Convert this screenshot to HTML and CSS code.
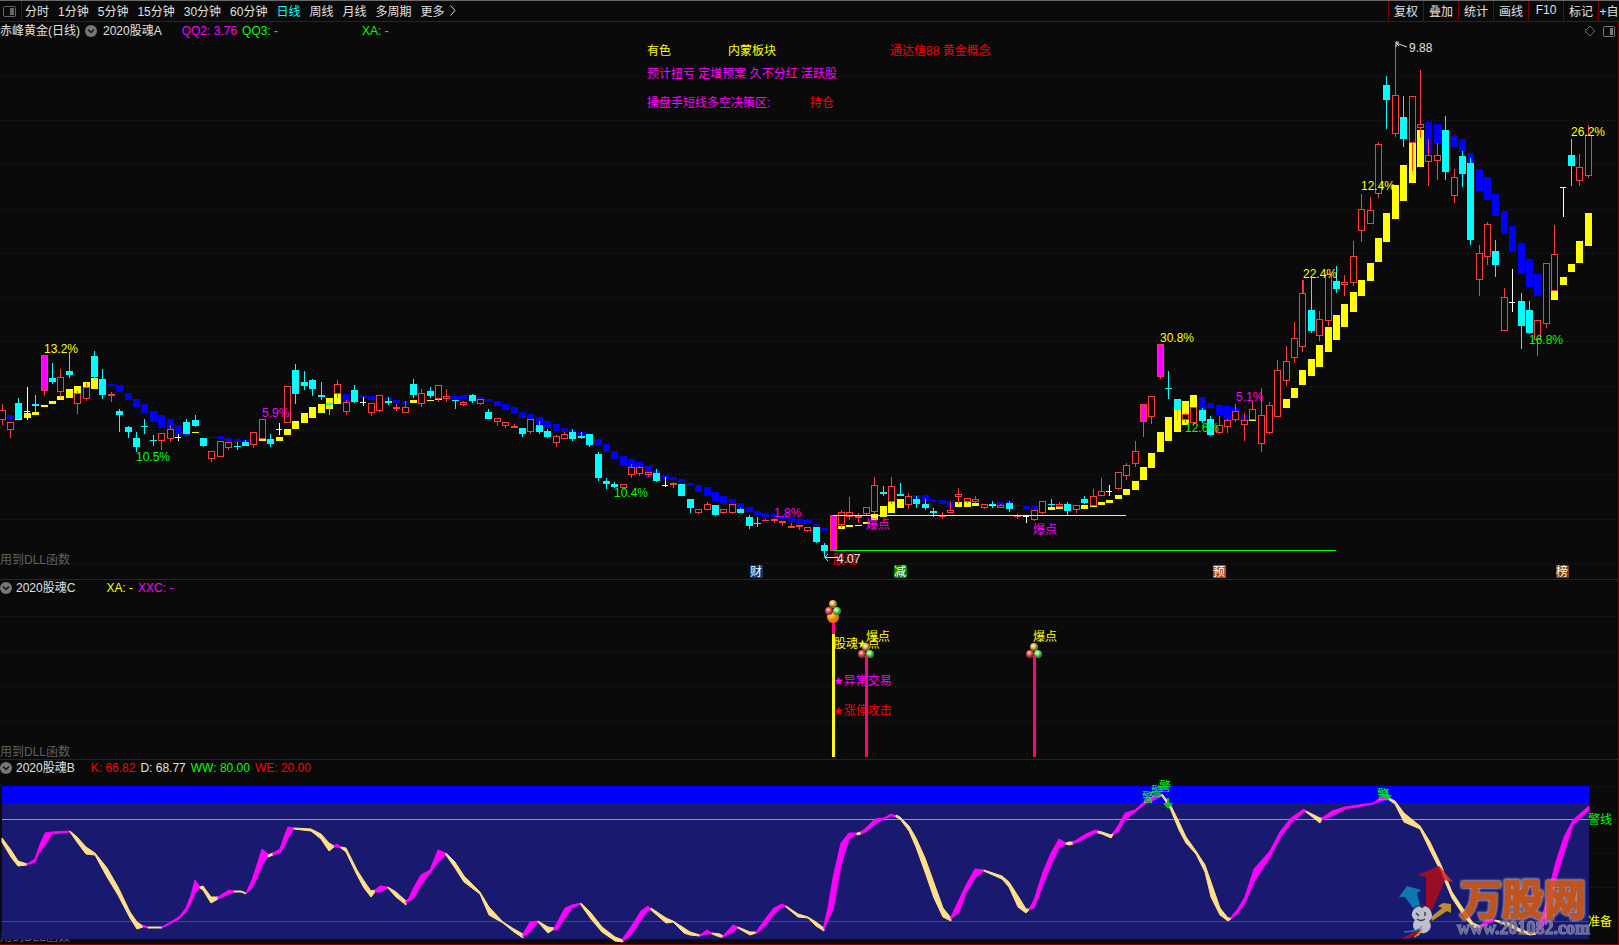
FILE: index.html
```html
<!DOCTYPE html>
<html lang="zh-CN">
<head>
	<meta charset="utf-8">
	<title>赤峰黄金(日线)</title>
	<link rel="stylesheet" href="styles.css">
</head>
<body>
	<nav class="toolbar">
		<button class="layout-btn" aria-label="布局">
			<svg width="13" height="11" viewBox="0 0 13 11"><rect x="0.5" y="0.5" width="12" height="10" rx="1" fill="none" stroke="#666"/><rect x="7" y="2" width="4" height="7" fill="#666"/></svg>
		</button>
		<div class="periods">
			<button>分时</button>
			<button>1分钟</button>
			<button>5分钟</button>
			<button>15分钟</button>
			<button>30分钟</button>
			<button>60分钟</button>
			<button class="active">日线</button>
			<button>周线</button>
			<button>月线</button>
			<button>多周期</button>
			<button class="more">更多<svg width="6" height="11" viewBox="0 0 6 11"><path d="M0.5 0.5L5 5.5L0.5 10.5" fill="none" stroke="#ddd"/></svg></button>
		</div>
		<div class="tools">
			<button>复权</button>
			<button>叠加</button>
			<button>统计</button>
			<button>画线</button>
			<button>F10</button>
			<button>标记</button>
			<button class="self">+自</button>
		</div>
	</nav>

	<main class="charts">
		<section class="pane">
			<div class="legend">
				<span>赤峰黄金(日线)</span>
				<button class="fold" aria-label="指标"><svg width="12" height="12" viewBox="0 0 12 12"><circle cx="6" cy="6" r="6" fill="#777"/><path d="M3 4.5L6 7.5L9 4.5" fill="none" stroke="#111" stroke-width="1.5"/></svg></button>
				<span class="name name-a">2020股魂A</span>
				<span class="magenta">QQ2: 3.76</span>
				<span class="green">QQ3: -</span>
				<span class="green far">XA: -</span>
				<span class="corner">
					<svg width="12" height="12" viewBox="0 0 12 12"><path d="M6 1L11 6L6 11L1 6Z" fill="none" stroke="#666"/></svg>
					<svg width="12" height="11" viewBox="0 0 12 11"><rect x="0.5" y="0.5" width="11" height="10" rx="1" fill="none" stroke="#777"/><rect x="7" y="2" width="3" height="7" fill="#777"/></svg>
				</span>
			</div>
			<svg class="plot" viewBox="0 40 1618 539">
				<g class="grid" id="gridMain"></g>
				<text x="0" y="564" class="dim">用到DLL函数</text>
				<g id="candles"></g>
				<path d="M833 515.5H1126" stroke="#ff0" class="crisp"/>
				<path d="M833 550.5H1336" stroke="#0f0" class="crisp"/>

				<g class="f-yellow">
					<text x="647" y="55">有色</text>
					<text x="728" y="55">内蒙板块</text>
					<text x="44" y="353">13.2%</text>
					<text x="1160" y="342">30.8%</text>
					<text x="1303" y="278">22.4%</text>
					<text x="1361" y="190">12.4%</text>
					<text x="1571" y="136">26.2%</text>
				</g>
				<g class="f-red">
					<text x="890" y="55">通达信88 黄金概念</text>
					<text x="810" y="107">持仓</text>
					<text x="833" y="564">股魂</text>
				</g>
				<g class="f-magenta">
					<text x="647" y="78">预计扭亏 定增预案 久不分红 活跃股</text>
					<text x="647" y="107">操盘手短线多空决策区:</text>
					<text x="262" y="417">5.9%</text>
					<text x="774" y="517">1.8%</text>
					<text x="1236" y="401">5.1%</text>
					<text x="866" y="529">爆点</text>
					<text x="1033" y="534">爆点</text>
				</g>
				<g class="f-green">
					<text x="136" y="461">10.5%</text>
					<text x="614" y="497">10.4%</text>
					<text x="1185" y="432">12.6%</text>
					<text x="1529" y="344">16.8%</text>
				</g>
				<g class="f-white">
					<text x="1409" y="52">9.88</text>
					<text x="837" y="563">4.07</text>
				</g>
				<path d="M1396 43L1407 47M1396 47V42H1399M1396 43L1399 46" fill="none" stroke="#ddd"/>
				<path d="M825 557.5H838M828 554L825 557.5L828 561" fill="none" stroke="#ddd"/>

				<g class="tags">
					<rect x="750" y="565" width="13" height="13" fill="#003a78"/><text x="756" y="576">财</text>
					<rect x="894" y="565" width="13" height="13" fill="#008000"/><text x="900" y="576">减</text>
					<rect x="1213" y="565" width="13" height="13" fill="#c0440c"/><text x="1219" y="576">预</text>
					<rect x="1556" y="565" width="13" height="13" fill="#803c00"/><text x="1562" y="576">榜</text>
				</g>
			</svg>
		</section>

		<section class="pane">
			<div class="legend legend-sub">
				<button class="fold" aria-label="指标"><svg width="12" height="12" viewBox="0 0 12 12"><circle cx="6" cy="6" r="6" fill="#777"/><path d="M3 4.5L6 7.5L9 4.5" fill="none" stroke="#111" stroke-width="1.5"/></svg></button>
				<span class="name name-c">2020股魂C</span>
				<span class="yellow">XA: -</span>
				<span class="magenta">XXC: -</span>
			</div>
			<svg class="plot" viewBox="0 598 1618 161">
				<defs>
					<radialGradient id="gold" cx="0.4" cy="0.35"><stop offset="0" stop-color="#fff8dc"/><stop offset="0.6" stop-color="#d8b450"/><stop offset="1" stop-color="#8a6a20"/></radialGradient>
					<radialGradient id="ruby" cx="0.4" cy="0.35"><stop offset="0" stop-color="#ffe0e0"/><stop offset="0.6" stop-color="#e05050"/><stop offset="1" stop-color="#a02828"/></radialGradient>
					<radialGradient id="jade" cx="0.4" cy="0.35"><stop offset="0" stop-color="#f0ffe8"/><stop offset="0.6" stop-color="#70dc60"/><stop offset="1" stop-color="#309030"/></radialGradient>
					<radialGradient id="amber" cx="0.35" cy="0.3"><stop offset="0" stop-color="#fff8b0"/><stop offset="0.5" stop-color="#ffb020"/><stop offset="1" stop-color="#f07800"/></radialGradient>
					<g id="balls">
						<circle cx="0" cy="-7" r="4" fill="url(#gold)"/>
						<circle cx="-4" cy="0" r="4" fill="url(#ruby)"/>
						<circle cx="4" cy="0" r="4" fill="url(#jade)"/>
					</g>
				</defs>
				<g class="grid" id="gridMid"></g>
				<text x="0" y="756" class="dim">用到DLL函数</text>
				<rect x="832" y="620" width="3" height="14" fill="#ff0080"/>
				<rect x="832" y="634" width="3" height="123" fill="#ff0"/>
				<g class="f-yellow">
					<text x="834" y="648">股魂<tspan class="star" x="857">★</tspan>点</text>
					<text x="866" y="641">爆点</text>
					<text x="1033" y="641">爆点</text>
				</g>
				<text x="833" y="685" class="f-magenta"><tspan class="star">★</tspan>异常交易</text>
				<text x="833" y="715" class="f-red"><tspan class="star">★</tspan>涨停攻击</text>
				<rect x="865" y="656" width="3" height="101" fill="#ff0080"/>
				<rect x="1033" y="656" width="3" height="101" fill="#ff0080"/>
				<circle cx="833" cy="617" r="6" fill="url(#amber)"/>
				<use href="#balls" x="833" y="611"/>
				<use href="#balls" x="866" y="654"/>
				<use href="#balls" x="1034" y="654"/>
			</svg>
		</section>

		<section class="pane">
			<div class="legend legend-sub">
				<button class="fold" aria-label="指标"><svg width="12" height="12" viewBox="0 0 12 12"><circle cx="6" cy="6" r="6" fill="#777"/><path d="M3 4.5L6 7.5L9 4.5" fill="none" stroke="#111" stroke-width="1.5"/></svg></button>
				<span class="name name-b">2020股魂B</span>
				<span class="red">K: 66.82</span>
				<span>D: 68.77</span>
				<span class="green">WW: 80.00</span>
				<span class="red">WE: 20.00</span>
			</div>
			<svg class="plot" viewBox="0 778 1618 166">
				<g class="grid" id="gridLow"></g>
				<text x="0" y="941" class="dim">用到DLL函数</text>
				<rect x="2" y="803" width="1587" height="136" fill="#191970"/>
				<rect x="2" y="786" width="1587" height="17" fill="#00f"/>
				<rect x="2" y="819" width="1587" height="1" fill="#0f0"/>
				<rect x="2" y="921" width="1587" height="1" fill="#f00"/>
				<g id="kd"></g>
				<g class="f-green">
					<text x="1142" y="802">警</text>
					<text x="1151" y="796">警</text>
					<text x="1159" y="791">警</text>
					<text x="1377" y="799">警</text>
					<text x="1588" y="824">警线</text>
				</g>
				<path d="M1167 798h2v5h4l-5 6l-5 -6h4zM1386 790h2v5h4l-5 6l-5 -6h4z" fill="#00d020"/>
				<text x="1588" y="926" class="f-yellow">准备</text>

				<g class="mark">
					<path d="M1439 866L1453 882L1445 880L1432 910L1426 907V877L1417 875Z" fill="#a80c20"/>
					<path d="M1439 866L1453 882L1445 880Z" fill="#c8382c"/>
					<path d="M1407 886L1421 890L1417 893L1420 905L1413 908L1405 897H1399Z" fill="#0c84b8"/>
					<path d="M1443 903L1451 904V913L1447 911L1432 921L1431 917L1442 908L1438 906Z" fill="#cc9c20"/>
					<path d="M1422 906q9 0 10 9q0 4 -3 6q3 4 1 8q-3 5 -9 4q-8 -1 -8 -8q0 -3 2 -5q-4 -3 -3 -7q2 -7 10 -7z" fill="#d0d0dc"/>
					<path d="M1416 913l3 3M1425 912v4M1417 919q4 3 8 0" fill="none" stroke="#444" stroke-width="1.5"/>
					<circle cx="1422" cy="906" r="2" fill="#333"/>
					<path d="M1422 926Q1418 932 1404 932L1418 930Z" fill="#0c94d0" stroke="#0c94d0"/>
					<path d="M1423 927Q1416 938 1402 939Q1410 933 1421 929Z" fill="#b01020"/>
					<path d="M1422 930L1414 937L1419 935Z" fill="#cc9c20" stroke="#cc9c20"/>
					<text x="1460" y="915" class="mark-name">万股网</text>
					<text x="1457" y="934" class="mark-url">www.201082.com</text>
				</g>
			</svg>
		</section>
	</main>
	<script src="script.js"></script>
</body>
</html>
```
FILE: styles.css
```css
* {
	box-sizing: border-box;
}
body {
	margin: 0;
	background: #0a0a0a;
	color: #e0e0e0;
	font: 12px "Liberation Sans", "Noto Sans CJK SC", sans-serif;
}
button {
	background: none;
	border: 0;
	padding: 0;
	color: inherit;
	font: inherit;
	white-space: nowrap;
	cursor: pointer;
}

/* top bar */
.toolbar {
	display: flex;
	height: 22px;
	border-top: 1px solid #696969;
	border-bottom: 1px solid #800000;
}
.layout-btn {
	display: flex;
	align-items: center;
	width: 22px;
	padding-left: 3px;
	border-right: 1px solid #800000;
}
.periods {
	display: flex;
	flex: 1;
	gap: 9px;
	padding-left: 3px;
}
.periods button, .tools button {
	padding-bottom: 2px;
}
.active {
	color: #00ffff;
}
.more {
	display: flex;
	align-items: center;
	gap: 5px;
}
.tools {
	display: flex;
}
.tools button {
	width: 35px;
	border-left: 1px solid #800000;
}
.tools .self {
	width: 21px;
}

/* panes */
.charts {
	border-right: 1px solid #800000;
}
.pane {
	border-bottom: 1px solid #800000;
}
.legend {
	display: flex;
	align-items: center;
	gap: 5px;
	height: 18px;
	line-height: 18px;
	white-space: nowrap;
}
.legend-sub {
	padding-bottom: 2px;
}
.legend .fold {
	display: flex;
}
.name-a {
	margin-left: 1px;
	margin-right: 15px;
}
.name-b {
	margin-left: -1px;
	margin-right: 11px;
}
.name-c {
	margin-left: -1px;
	margin-right: 26px;
}
.far {
	margin-left: 79px;
}
.corner {
	display: flex;
	align-items: center;
	gap: 7px;
	margin-left: auto;
	padding-right: 3px;
}
.plot {
	display: block;
	width: 100%;
	height: auto;
}

.red { color: #ff0000; }
.green { color: #00ff00; }
.yellow { color: #ffff00; }
.magenta { color: #ff00ff; }

.f-red { fill: #ff0000; }
.f-green { fill: #00ff00; }
.f-yellow { fill: #ffff00; }
.f-magenta { fill: #ff00ff; }
.f-white { fill: #e0e0e0; }
.dim { fill: #606060; }
.star { font-family: "DejaVu Sans", sans-serif; }

.grid path {
	stroke: #800000;
	stroke-dasharray: 1 3;
	shape-rendering: crispEdges;
}
.crisp, #candles {
	shape-rendering: crispEdges;
}
.tags text {
	fill: #ffffff;
	text-anchor: middle;
}
.mark {
	opacity: 0.9;
}
.mark-name {
	font-size: 42px;
	font-weight: bold;
	fill: #d05c18;
	stroke: #d05c18;
	stroke-width: 2px;
	filter: drop-shadow(0 0 1px #b0b0c8) drop-shadow(0 0 1px #b0b0c8);
}
.mark-url {
	font: bold 18px "Liberation Serif", serif;
	fill: #74749c;
	stroke: #a0a0b8;
	stroke-width: 1px;
	paint-order: stroke;
}
```
FILE: script.js
```js
// kind, high, body top, body bottom, low [, ribbon colour, ribbon top, ribbon bottom]
// r = hollow red, c = cyan, m = magenta, w = white cross
var bars = `r 404 410 420 425
r 422 422 430 438 b 415 419
c 398 403 419 419 y 419 420
w 387 411 412 420 y 413 418
c 395 404 406 412 y 412 415
m 355 355 391 396 y 405 407
c 363 378 382 384 y 401 404
r 369 377 392 397 y 396 400
c 352 371 375 378 y 389 398
r 391 393 404 414 y 386 393
r 383 387 399 401 y 382 387
c 351 356 377 379 y 378 389
c 369 379 395 399
r 392 394 396 402 b 384 386
c 409 411 415 432 b 385 392
c 426 427 432 438 b 393 400
c 432 438 447 452 b 399 407
c 419 426 427 434 b 404 413
c 435 440 441 446 b 411 422
r 433 433 441 450 b 415 428
r 425 429 439 442 b 419 429
w 434 437 438 441 b 425 436
c 419 422 434 434 b 434 436
c 415 420 426 427 y 432 433
c 438 438 446 447 b 435 436
r 451 451 459 462 b 437 438
r 441 441 457 457 b 436 439
r 442 442 448 450 b 438 441
c 442 446 447 450 b 439 442
c 440 442 446 446 b 440 442
r 432 432 445 448
r 419 419 439 439 y 439 441
c 434 439 444 447
w 423 429 430 435 y 437 441
r 386 386 423 423 y 429 435
c 364 370 394 404 y 421 429
c 371 382 386 390 y 413 423
c 379 380 389 396 y 407 418
c 382 395 397 400 y 404 413
c 402 403 405 415 y 398 409
r 380 384 394 398 y 394 404
r 400 402 412 415 b 394 402
c 385 390 402 403
w 397 402 403 406 b 395 398
r 403 403 413 416 b 396 400
r 395 395 411 412
c 397 401 403 405 b 398 400
r 404 407 409 411 b 400 403
r 401 407 413 413 b 401 404
c 379 384 395 398 y 400 403
r 389 393 404 407
c 387 391 396 398 y 400 401
r 385 385 399 402 y 399 400
r 389 396 399 402
c 400 400 401 409 b 396 399
r 401 402 405 406 b 395 399
c 394 395 401 403
r 399 399 404 405 b 397 399
c 409 412 419 419 b 399 401
r 418 418 422 426 b 401 406
r 422 422 426 428 b 404 410
r 424 426 428 428 b 407 413
c 428 428 434 437 b 412 418
r 419 419 432 434 b 414 419
c 421 425 432 434 b 417 425
c 429 431 437 438 b 421 428
r 435 436 443 447 b 424 431
r 432 434 439 439 b 428 432
c 429 432 439 441 b 430 432
c 432 436 438 439 b 432 435
c 434 434 445 447
c 452 454 478 481 b 439 445
c 478 481 484 489 b 444 452
c 482 484 487 488 b 451 459
r 484 484 488 488 b 456 466
r 464 467 475 478 b 459 467
r 466 467 474 476 b 462 467
r 472 472 475 477 b 466 478
c 469 473 481 482 b 470 473
w 477 485 486 487 b 475 479
r 482 483 485 488 b 477 480
c 484 484 496 496 b 479 482
c 499 499 508 513 b 483 486
r 509 509 513 514 b 485 492
r 502 504 510 510 b 487 496
c 505 505 515 516 b 492 501
r 509 509 513 514 b 496 504
r 504 504 513 514 b 499 504
c 508 509 513 513 b 503 509
c 515 517 526 529 b 507 512
c 517 523 524 527 b 511 515
r 519 520 521 521 b 513 517
r 518 519 521 523 b 514 517
r 521 521 523 526 b 515 519
r 523 526 528 528 b 518 522
r 525 525 527 530 b 519 524
r 527 527 531 532 b 520 524
c 527 527 542 543 b 524 526
c 543 545 551 557 b 528 531
m 515 515 551 551
r 510 512 525 528 y 526 529
r 497 512 517 520 y 525 527
r 513 516 518 523 y 525 526
r 507 507 514 516 y 522 524
r 477 485 512 514 y 514 520
c 486 492 494 496 y 506 517
r 477 486 502 504 y 502 513
c 483 494 496 496 y 499 508
r 493 496 505 509
c 496 499 504 508 b 495 499
c 499 504 508 510 b 495 501
c 508 511 513 517 b 500 501
r 512 516 517 519 b 500 504
r 502 510 513 513 b 501 507
r 488 494 497 504 y 502 507
r 498 498 502 503 y 502 507
r 496 499 502 503 y 503 506
r 504 504 508 509
c 501 504 505 508 y 504 506
r 504 505 508 508 b 502 505
c 501 503 509 512 b 502 503
r 514 516 517 519 b 505 506
w 516 516 517 523 b 506 509
r 510 510 520 521 b 506 510
r 501 501 513 514
c 499 504 505 507 y 507 510
r 502 504 507 507 y 507 509
c 502 504 511 515
r 505 505 510 513
c 496 499 503 504 y 505 509
r 489 496 506 506 y 506 507
r 478 491 496 496 y 502 505
w 485 491 492 496 y 500 503
r 472 472 489 490 y 495 499
r 463 465 476 480 y 489 495
r 441 451 464 467 y 481 490
m 404 404 422 437 y 467 480
r 396 396 417 424 y 453 468
m 344 344 377 379 y 432 452
c 371 388 389 399 y 417 441
c 399 399 410 420 y 410 432
r 413 414 420 423 y 401 425
r 407 407 423 426 y 395 407
c 408 410 421 423 b 397 410
c 416 419 435 436 b 403 408
r 416 425 433 434 b 405 415
r 419 420 427 433 b 406 420
r 404 411 420 422 b 408 411
r 413 420 425 441 b 415 420
r 401 409 420 420 y 420 421
r 388 415 444 452
r 402 405 433 434
r 360 370 417 417
r 346 361 381 386 y 399 408
r 322 338 358 363 y 388 398
r 280 293 347 352 y 370 385
c 278 310 331 333 y 359 376
r 311 319 336 341 y 345 367
r 274 274 321 326 y 327 352
c 266 281 289 293 y 315 340
r 275 282 285 296 y 304 327
r 241 256 283 286 y 292 312
r 194 209 231 242 y 280 296
r 197 210 224 224 y 263 281
r 142 144 194 198 y 238 262
c 76 85 100 129 y 213 242
r 45 95 134 137 y 185 219
c 96 117 139 147 y 165 201
r 96 96 143 171 y 143 183
r 70 124 128 138 y 130 167
r 139 155 162 186 b 122 154
r 143 155 161 180 b 124 144
c 116 130 172 180
r 169 177 196 203 b 136 147
c 151 156 174 187 b 139 152
c 158 163 240 245 b 153 163
r 245 253 280 296 b 169 191
r 222 224 257 265 b 177 200
c 240 251 265 277 b 194 216
r 288 297 331 331 b 211 234
w 269 302 303 312 b 226 252
c 293 301 326 349 b 243 274
c 301 310 333 334 b 259 287
r 320 320 340 356 b 274 296
r 263 263 324 328
r 225 254 291 291 y 291 300
w 187 187 188 217 y 277 285
c 139 155 166 186 y 264 272
r 154 167 181 186 y 241 263
r 125 135 176 178 y 213 246`.split('\n');

var colors = { r: '#ff3c3c', c: '#00ffff', m: '#ff00ff', w: '#ffffff', b: '#0000ff', y: '#ffff00' };

function rect(x, y, w, h, fill) {
	return '<rect x="' + x + '" y="' + y + '" width="' + w + '" height="' + h + '" fill="' + fill + '"/>';
}

function drawCandles() {
	var ribbon = '', out = '';
	for (var i = 0; i < bars.length; i++) {
		var b = bars[i].split(' ');
		var k = b[0], hi = +b[1], top = +b[2], bot = +b[3], lo = +b[4];
		// left edge of the 7px body
		var x = Math.floor(i * 8.392 + 0.2) - 1;
		if (b[5]) ribbon += rect(x, b[6], 7, b[7] - b[6], colors[b[5]]);
		if (k == 'w') {
			out += rect(x + 3, hi, 1, lo - hi, colors.w) + rect(x, top, 6, 1, colors.w);
			continue;
		}
		var wick = k == 'm' ? colors.r : colors[k];
		out += rect(x + 3, hi, 1, lo - hi, wick);
		if (k == 'c' || bot - top < 3) {
			out += rect(x, top, 7, bot - top, colors[k]);
		} else {
			out += rect(x, top, 7, bot - top, colors.r);
			out += rect(x + 1, top + 1, 5, bot - top - 2, k == 'm' ? colors.m : '#0a0a0a');
			// the lower wick of this bar runs over the ribbon
		}
	}
	// upper wick over the limit-up price
	out += rect(1303, 280, 1, 13, colors.m);
	document.getElementById('candles').innerHTML = ribbon + out;
}

// K/D band: colour, then x,upper,lower for every knot
var band = [
	'y 2,838,842 11,850,857 18,861,866 27,864,865',
	'm 27,864,865 35,859,862 39,847,853 45,833,845 52,832,834 70,831,832',
	'y 70,831,832 77,837,842 86,847,854 95,853,855 107,868,877 118,887,895 130,912,918 137,922,929 143,926,927',
	'm 143,925,927 148,927,928',
	'y 148,927,928 162,927,928',
	'm 162,927,928 179,917,919 186,908,912 191,895,903 195,880,893 200,887,888',
	'y 200,887,888 203,886,890 211,897,903 218,897,899',
	'm 218,897,899 229,890,894 234,891,892',
	'y 234,891,892 241,891,892 246,893,894',
	'm 246,893,894 252,880,888 257,865,878 262,849,865 268,854,857',
	'y 268,855,857 273,853,855',
	'm 273,853,855 280,849,853 284,837,847 288,827,838 294,828,829',
	'y 294,828,829 311,829,831 321,834,839 329,843,851 334,846,847',
	'm 334,846,847 337,844,847 341,847,848',
	'y 341,847,848 346,848,852 357,870,875 364,881,888 371,891,897 375,890,892',
	'm 375,890,892 380,886,892 388,887,888',
	'y 388,887,888 396,892,897 406,901,905',
	'm 406,901,903 409,898,901 414,887,898 421,875,885 430,870,873 438,850,862 446,853,855',
	'y 446,853,855 455,862,868 464,876,882 480,892,894 489,907,915 503,922,923 514,929,932 523,934,938',
	'm 523,934,937 530,922,932 538,921,922',
	'y 538,921,922 548,927,933 554,928,929',
	'm 554,928,930 557,923,930 565,908,918 572,905,908 581,903,904',
	'y 581,903,905 591,913,919 602,927,932 615,937,941 623,940,942',
	'm 623,938,941 631,927,935 641,911,920 648,906,910 651,909,910',
	'y 651,908,910 666,918,923 673,921,922 684,928,933 690,932,935 700,935,936',
	'm 700,935,936 707,930,934 712,933,934',
	'y 712,933,934 720,934,937 723,936,937',
	'm 723,936,937 733,925,932 738,927,928',
	'y 738,927,928 750,932,935 756,932,933',
	'm 756,932,934 766,918,925 774,908,914 782,904,907 786,906,907',
	'y 786,906,907 798,914,917 808,917,918 816,922,926 824,928,931',
	'm 824,925,929 828,908,920 833,878,910 841,843,865 849,833,839 857,833,834',
	'y 857,833,835 861,832,834',
	'm 861,832,834 866,828,832 875,819,824 884,818,819 891,814,816 896,816,817',
	'y 896,815,817 900,817,819 909,826,831 916,838,847 925,858,872 934,883,898 943,908,917 951,918,921',
	'm 951,917,919 959,900,912 966,885,893 975,869,878 984,870,871',
	'y 984,870,871 1002,876,879 1009,882,887 1018,896,907 1026,909,913 1029,909,910',
	'm 1029,909,910 1034,900,908 1043,872,885 1051,853,865 1059,839,848 1066,843,844',
	'y 1066,843,844 1069,842,845 1073,842,844',
	'm 1073,842,844 1086,834,838 1095,830,833 1098,831,833',
	'y 1098,831,833 1102,832,834 1111,835,838 1113,833,835',
	'm 1113,833,835 1118,826,832 1125,813,820 1135,810,812 1145,801,804 1154,796,800 1162,794,796',
	'y 1162,794,796 1170,804,808 1179,822,830 1186,837,843 1196,851,854 1205,865,872 1211,882,897 1220,908,915 1228,918,921 1231,918,919',
	'm 1231,917,919 1237,910,914 1245,897,903 1254,869,882 1270,851,857 1280,832,838 1291,818,823 1304,809,812 1306,811,812',
	'y 1306,811,812 1320,818,823 1322,818,819',
	'm 1322,818,820 1332,811,816 1345,807,809 1373,803,804 1380,798,801 1389,798,799',
	'y 1389,798,800 1395,801,804 1404,813,822 1420,826,829 1430,842,850 1441,865,872 1452,892,898 1466,913,919 1473,923,927 1480,926,928',
	'm 1480,926,928 1487,919,924 1495,920,921',
	'y 1495,920,921 1509,923,926 1520,929,932 1530,933,935 1536,933,934',
	'm 1536,933,934 1541,920,928 1546,903,922 1555,865,882 1564,837,853 1573,820,825 1589,806,810'
];

function drawBand() {
	var out = '';
	band.forEach(function (s) {
		var knots = s.slice(2).split(' ').map(function (p) { return p.split(','); });
		var up = knots.map(function (p) { return p[0] + ',' + p[1]; });
		var down = knots.map(function (p) { return p[0] + ',' + p[2]; }).reverse();
		var color = s[0] == 'm' ? '#ff00ff' : '#ffe088';
		out += '<polygon points="' + up.concat(down).join(' ') + '" fill="' + color + '" stroke="' + color + '"/>';
	});
	document.getElementById('kd').innerHTML = out;
}

function drawGrid(id, from, ys) {
	document.getElementById(id).innerHTML = ys.map(function (y) {
		return '<path d="M' + from + ' ' + (y + 0.5) + 'H1616"/>';
	}).join('');
}

drawGrid('gridMain', 3, [76, 120, 164, 209, 253, 297, 341, 386, 430, 474, 519, 563]);
drawGrid('gridMid', 3, [616, 651, 686, 721]);
drawGrid('gridLow', 1591, [786, 819, 853, 887, 921]);
drawCandles();
drawBand();
```
